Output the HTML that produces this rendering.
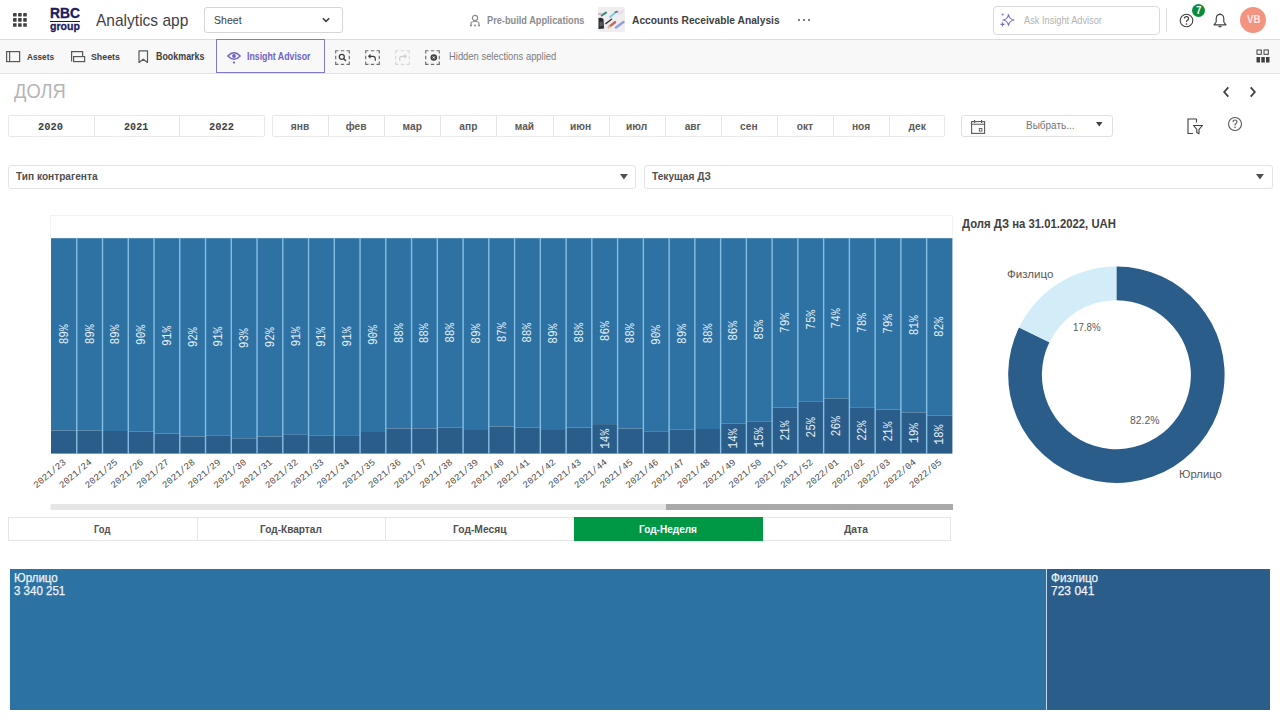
<!DOCTYPE html><html><head><meta charset="utf-8"><style>
*{margin:0;padding:0;box-sizing:border-box}
html,body{width:1280px;height:720px;overflow:hidden;background:#fff;font-family:'Liberation Sans', sans-serif;color:#404040}
.a{position:absolute}
.t{position:absolute;white-space:nowrap;line-height:1}
</style></head><body>
<div class="a" style="left:0;top:0;width:1280px;height:39px;background:#fff"></div>
<div class="a" style="left:0;top:39px;width:1280px;height:1px;background:#dedede"></div>
<svg class="a" style="left:13.2px;top:13.3px" width="15" height="15"><rect x="0.0" y="0.0" width="3.6" height="3.6" rx="0.4" fill="#404040"/><rect x="5.1" y="0.0" width="3.6" height="3.6" rx="0.4" fill="#404040"/><rect x="10.2" y="0.0" width="3.6" height="3.6" rx="0.4" fill="#404040"/><rect x="0.0" y="5.1" width="3.6" height="3.6" rx="0.4" fill="#404040"/><rect x="5.1" y="5.1" width="3.6" height="3.6" rx="0.4" fill="#404040"/><rect x="10.2" y="5.1" width="3.6" height="3.6" rx="0.4" fill="#404040"/><rect x="0.0" y="10.2" width="3.6" height="3.6" rx="0.4" fill="#404040"/><rect x="5.1" y="10.2" width="3.6" height="3.6" rx="0.4" fill="#404040"/><rect x="10.2" y="10.2" width="3.6" height="3.6" rx="0.4" fill="#404040"/></svg>
<div class="t" style="left:50.30px;top:7.32px;font:bold 13.95px/1 'Liberation Sans', sans-serif;color:#1c1a5e;transform:scaleX(0.9897);transform-origin:0 0;-webkit-text-stroke:0.35px #1c1a5e;">RBC</div>
<div class="a" style="left:50px;top:20.6px;width:30.3px;height:1.5px;background:#1c1a5e"></div>
<div class="t" style="left:50.30px;top:20.60px;font:bold 11.00px/1 'Liberation Sans', sans-serif;color:#1c1a5e;transform:scaleX(0.9588);transform-origin:0 0;-webkit-text-stroke:0.3px #1c1a5e;">group</div>
<div class="t" style="left:96.40px;top:13.05px;font:normal 15.70px/1 'Liberation Sans', sans-serif;color:#3f3f3f;transform:scaleX(0.9893);transform-origin:0 0;">Analytics app</div>
<div class="a" style="left:203.5px;top:7.3px;width:139.5px;height:25.4px;border:1px solid #d6d6d6;border-radius:3px"></div>
<div class="t" style="left:214.00px;top:13.89px;font:normal 11.63px/1 'Liberation Sans', sans-serif;color:#404040;transform:scaleX(0.9077);transform-origin:0 0;">Sheet</div>
<svg class="a" style="left:321px;top:16px" width="10" height="8"><path d="M1.8 2.2 L5 5.4 L8.2 2.2" stroke="#404040" stroke-width="1.6" fill="none"/></svg>
<svg class="a" style="left:469px;top:14px" width="12" height="13"><circle cx="6" cy="4" r="2.6" stroke="#8c8c8c" stroke-width="1.2" fill="none"/><path d="M2 11.5 V9.5 Q2 7.5 6 7.5 Q10 7.5 10 9.5 V11.5" stroke="#8c8c8c" stroke-width="1.2" fill="none"/><circle cx="2" cy="11.5" r="1" fill="#8c8c8c"/><circle cx="6" cy="11.5" r="1" fill="#8c8c8c"/><circle cx="10" cy="11.5" r="1" fill="#8c8c8c"/></svg>
<div class="t" style="left:487.00px;top:14.52px;font:bold 10.76px/1 'Liberation Sans', sans-serif;color:#8c8c8c;transform:scaleX(0.8572);transform-origin:0 0;">Pre-build Applications</div>
<svg class="a" style="left:598px;top:7px" width="27" height="25"><rect width="27" height="25" rx="1.5" fill="#efedf0"/><path d="M0.5 11 Q3 10 5.5 12 L6 21.5 L0.5 22 Z" fill="#2a2a2e"/><path d="M1.5 15 L4.5 14.5 L5 19 L1.5 19.5 Z" fill="#55555c"/><line x1="3.8" y1="8.4" x2="8" y2="5.6" stroke="#3b8a80" stroke-width="2.2" stroke-linecap="round"/><line x1="0.8" y1="7.2" x2="2.6" y2="6.6" stroke="#d9a3b5" stroke-width="1.6" stroke-linecap="round"/><line x1="12.2" y1="10" x2="17.6" y2="5.2" stroke="#7fcfe2" stroke-width="2.2" stroke-linecap="round"/><line x1="17.6" y1="5.2" x2="19.4" y2="4.6" stroke="#7a7a80" stroke-width="1.8" stroke-linecap="round"/><line x1="7.8" y1="16.6" x2="13.6" y2="12.2" stroke="#3a3a3e" stroke-width="1.4" stroke-linecap="round"/><line x1="11.5" y1="19.6" x2="17" y2="15.2" stroke="#c06a66" stroke-width="2.6" stroke-linecap="round"/><line x1="10.4" y1="20.6" x2="11.8" y2="19.6" stroke="#dcc896" stroke-width="2" stroke-linecap="round"/><line x1="18" y1="20.5" x2="25.5" y2="15" stroke="#8fa0d8" stroke-width="2.4" stroke-linecap="round"/><line x1="21" y1="7" x2="25" y2="4" stroke="#e2dde8" stroke-width="2" stroke-linecap="round"/></svg>
<div class="t" style="left:632.00px;top:14.54px;font:bold 11.41px/1 'Liberation Sans', sans-serif;color:#404040;transform:scaleX(0.8980);transform-origin:0 0;">Accounts Receivable Analysis</div>
<div class="a" style="left:797.5px;top:19.3px;width:2px;height:2px;border-radius:1px;background:#505050"></div>
<div class="a" style="left:802.5px;top:19.3px;width:2px;height:2px;border-radius:1px;background:#505050"></div>
<div class="a" style="left:807.5px;top:19.3px;width:2px;height:2px;border-radius:1px;background:#505050"></div>
<div class="a" style="left:992.5px;top:5.5px;width:167px;height:29px;border:1px solid #dadada;border-radius:4px"></div>
<svg class="a" style="left:1000px;top:13px" width="16" height="14"><path d="M8.5 1.5 Q9.3 6.2 14 7 Q9.3 7.8 8.5 12.5 Q7.7 7.8 3 7 Q7.7 6.2 8.5 1.5 Z" stroke="#7b70c8" stroke-width="1.2" fill="none" stroke-linejoin="round"/><circle cx="2.6" cy="1.6" r="1" fill="#7b70c8"/><path d="M0.5 11.3 H4.5 M2.5 9.3 V13.3" stroke="#7b70c8" stroke-width="1.2"/></svg>
<div class="t" style="left:1024.40px;top:15.84px;font:normal 10.32px/1 'Liberation Sans', sans-serif;color:#b3b3b3;transform:scaleX(0.8945);transform-origin:0 0;">Ask Insight Advisor</div>
<div class="a" style="left:1166px;top:7.5px;width:1px;height:24.5px;background:#e0e0e0"></div>
<svg class="a" style="left:1179px;top:12.5px" width="16" height="16"><circle cx="7.5" cy="7.5" r="6.3" stroke="#404040" stroke-width="1.1" fill="none"/><path d="M5.4 5.6 Q5.4 3.6 7.5 3.6 Q9.6 3.6 9.6 5.5 Q9.6 6.7 8.2 7.4 Q7.5 7.8 7.5 9" stroke="#404040" stroke-width="1.2" fill="none"/><circle cx="7.5" cy="11" r="0.85" fill="#404040"/></svg>
<div class="a" style="left:1192px;top:3.8px;width:13.2px;height:13.2px;border-radius:50%;background:#0b8a3b"></div>
<div class="t" style="left:1196.00px;top:5.91px;font:bold 10.17px/1 'Liberation Sans', sans-serif;color:#ffffff;transform:scaleX(0.9563);transform-origin:0 0;">7</div>
<svg class="a" style="left:1212px;top:12px" width="16" height="16"><path d="M8 1.3 V2.3 M8 2.3 C5 2.3 4.2 4.7 4.2 7 V10 L2 12.8 H14 L11.8 10 V7 C11.8 4.7 11 2.3 8 2.3 Z" stroke="#404040" stroke-width="1.15" fill="none" stroke-linejoin="round"/><path d="M6.6 14 Q8 15.4 9.4 14" stroke="#404040" stroke-width="1.15" fill="none"/></svg>
<div class="a" style="left:1240.2px;top:6.6px;width:26.2px;height:26.2px;border-radius:50%;background:#f29480"></div>
<div class="t" style="left:1246.50px;top:14.43px;font:bold 11.34px/1 'Liberation Sans', sans-serif;color:#fde9e4;transform:scaleX(0.8567);transform-origin:0 0;">VB</div>
<div class="a" style="left:0;top:40px;width:1280px;height:33px;background:#f8f8f8"></div>
<div class="a" style="left:0;top:73px;width:1280px;height:1px;background:#e2e2e2"></div>
<svg class="a" style="left:6px;top:51px" width="15" height="12"><rect x="0.6" y="0.6" width="13" height="10" stroke="#595959" stroke-width="1.2" fill="none"/><path d="M3.6 0.6 V10.6" stroke="#595959" stroke-width="1.2"/></svg>
<div class="t" style="left:27.00px;top:51.86px;font:bold 9.88px/1 'Liberation Sans', sans-serif;color:#404040;transform:scaleX(0.8328);transform-origin:0 0;">Assets</div>
<svg class="a" style="left:70.5px;top:51px" width="15" height="12"><path d="M0.6 10.6 V0.6 H11.6 V5" stroke="#595959" stroke-width="1.2" fill="none"/><rect x="2.6" y="5.6" width="11" height="5" stroke="#595959" stroke-width="1.2" fill="none"/></svg>
<div class="t" style="left:90.60px;top:51.86px;font:bold 9.88px/1 'Liberation Sans', sans-serif;color:#404040;transform:scaleX(0.8914);transform-origin:0 0;">Sheets</div>
<svg class="a" style="left:137.5px;top:50px" width="11" height="14"><path d="M1 0.8 H9.5 V12.5 L5.25 9.2 L1 12.5 Z" stroke="#595959" stroke-width="1.2" fill="none" stroke-linejoin="round"/></svg>
<div class="t" style="left:156.40px;top:52.01px;font:bold 10.17px/1 'Liberation Sans', sans-serif;color:#404040;transform:scaleX(0.8754);transform-origin:0 0;">Bookmarks</div>
<div class="a" style="left:215.9px;top:39.3px;width:108.7px;height:34px;border:1px solid #8078c8"></div>
<svg class="a" style="left:226.5px;top:50.5px" width="14" height="13"><path d="M0.8 5 Q7 -1.5 13.2 5 Q7 11.5 0.8 5 Z" stroke="#6f64c6" stroke-width="1.4" fill="none" stroke-linejoin="round"/><circle cx="7" cy="5" r="1.9" fill="#6f64c6"/><circle cx="7" cy="11.6" r="1.1" fill="#6f64c6"/></svg>
<div class="t" style="left:246.60px;top:52.01px;font:bold 10.17px/1 'Liberation Sans', sans-serif;color:#6f64c6;transform:scaleX(0.8634);transform-origin:0 0;">Insight Advisor</div>
<svg class="a" style="left:334.8px;top:49.8px;opacity:1" width="15" height="15"><path d="M0.7 3.5 V0.7 H3.5 M5.8 0.7 H9.2 M11.5 0.7 H14.3 V3.5 M14.3 5.8 V9.2 M14.3 11.5 V14.3 H11.5 M9.2 14.3 H5.8 M3.5 14.3 H0.7 V11.5 M0.7 9.2 V5.8" stroke="#6e6e6e" stroke-width="1.15" fill="none"/><circle cx="6.8" cy="6.8" r="2.5" stroke="#404040" stroke-width="1.3" fill="none"/><path d="M8.7 8.7 L11 11" stroke="#404040" stroke-width="1.5"/></svg>
<svg class="a" style="left:364.8px;top:49.8px;opacity:1" width="15" height="15"><path d="M0.7 3.5 V0.7 H3.5 M5.8 0.7 H9.2 M11.5 0.7 H14.3 V3.5 M14.3 5.8 V9.2 M14.3 11.5 V14.3 H11.5 M9.2 14.3 H5.8 M3.5 14.3 H0.7 V11.5 M0.7 9.2 V5.8" stroke="#6e6e6e" stroke-width="1.15" fill="none"/><path d="M5.5 4.5 L3.8 6.3 L5.5 8.1 M3.8 6.3 H8 Q10.3 6.3 10.3 8.6 V10.8" stroke="#404040" stroke-width="1.2" fill="none"/></svg>
<svg class="a" style="left:394.8px;top:49.8px;opacity:0.22" width="15" height="15"><path d="M0.7 3.5 V0.7 H3.5 M5.8 0.7 H9.2 M11.5 0.7 H14.3 V3.5 M14.3 5.8 V9.2 M14.3 11.5 V14.3 H11.5 M9.2 14.3 H5.8 M3.5 14.3 H0.7 V11.5 M0.7 9.2 V5.8" stroke="#6e6e6e" stroke-width="1.15" fill="none"/><path d="M9.5 4.5 L11.2 6.3 L9.5 8.1 M11.2 6.3 H7 Q4.7 6.3 4.7 8.6 V10.8" stroke="#404040" stroke-width="1.2" fill="none"/></svg>
<svg class="a" style="left:424.8px;top:49.8px;opacity:1" width="15" height="15"><path d="M0.7 3.5 V0.7 H3.5 M5.8 0.7 H9.2 M11.5 0.7 H14.3 V3.5 M14.3 5.8 V9.2 M14.3 11.5 V14.3 H11.5 M9.2 14.3 H5.8 M3.5 14.3 H0.7 V11.5 M0.7 9.2 V5.8" stroke="#6e6e6e" stroke-width="1.15" fill="none"/><circle cx="8.8" cy="7.5" r="3.3" fill="#404040"/><path d="M7.7 6.4 L9.9 8.6 M9.9 6.4 L7.7 8.6" stroke="#f8f8f8" stroke-width="1"/></svg>
<div class="t" style="left:448.80px;top:52.07px;font:normal 10.47px/1 'Liberation Sans', sans-serif;color:#7d7d7d;transform:scaleX(0.8989);transform-origin:0 0;">Hidden selections applied</div>
<svg class="a" style="left:1256px;top:49px" width="15" height="15"><rect x="1" y="1" width="4.3" height="4.3" stroke="#404040" stroke-width="1" fill="none"/><rect x="8" y="1" width="4.3" height="4.3" stroke="#404040" stroke-width="1" fill="none"/><rect x="0.5" y="8" width="3.5" height="5.5" fill="#404040"/><rect x="5.3" y="8" width="3.5" height="5.5" fill="#404040"/><rect x="10" y="8" width="3.5" height="5.5" fill="#404040"/></svg>
<div class="t" style="left:14.40px;top:79.96px;font:normal 21.08px/1 'Liberation Sans', sans-serif;color:#b5b5b5;transform:scaleX(0.8682);transform-origin:0 0;">ДОЛЯ</div>
<svg class="a" style="left:1220px;top:85px" width="12" height="14"><path d="M8.3 2.3 L4.2 7 L8.3 11.7" stroke="#404040" stroke-width="1.8" fill="none"/></svg>
<svg class="a" style="left:1246.5px;top:85px" width="12" height="14"><path d="M3.7 2.3 L7.8 7 L3.7 11.7" stroke="#404040" stroke-width="1.8" fill="none"/></svg>
<div class="a" style="left:8px;top:114.8px;width:256.5px;height:22.5px;border:1px solid #e8e8e8;border-radius:2px"></div>
<div class="t" style="left:38.00px;top:121.86px;font:bold 11.69px/1 'Liberation Mono', monospace;color:#404040;transform:scaleX(0.8911);transform-origin:0 0;">2020</div>
<div class="a" style="left:93.5px;top:115px;width:1px;height:22px;background:#e6e6e6"></div>
<div class="t" style="left:123.75px;top:121.86px;font:bold 11.69px/1 'Liberation Mono', monospace;color:#404040;transform:scaleX(0.8644);transform-origin:0 0;">2021</div>
<div class="a" style="left:179.0px;top:115px;width:1px;height:22px;background:#e6e6e6"></div>
<div class="t" style="left:209.00px;top:121.86px;font:bold 11.69px/1 'Liberation Mono', monospace;color:#404040;transform:scaleX(0.8911);transform-origin:0 0;">2022</div>
<div class="a" style="left:272px;top:114.8px;width:673.3px;height:22.5px;border:1px solid #e8e8e8;border-radius:2px"></div>
<div class="t" style="left:272.0px;top:122px;width:56.1px;text-align:center;font:bold 10.2px/1 'Liberation Sans', sans-serif;color:#5a5a5a">янв</div>
<div class="a" style="left:328.1px;top:115px;width:1px;height:22px;background:#e6e6e6"></div>
<div class="t" style="left:328.1px;top:122px;width:56.1px;text-align:center;font:bold 10.2px/1 'Liberation Sans', sans-serif;color:#5a5a5a">фев</div>
<div class="a" style="left:384.2px;top:115px;width:1px;height:22px;background:#e6e6e6"></div>
<div class="t" style="left:384.2px;top:122px;width:56.1px;text-align:center;font:bold 10.2px/1 'Liberation Sans', sans-serif;color:#5a5a5a">мар</div>
<div class="a" style="left:440.3px;top:115px;width:1px;height:22px;background:#e6e6e6"></div>
<div class="t" style="left:440.3px;top:122px;width:56.1px;text-align:center;font:bold 10.2px/1 'Liberation Sans', sans-serif;color:#5a5a5a">апр</div>
<div class="a" style="left:496.4px;top:115px;width:1px;height:22px;background:#e6e6e6"></div>
<div class="t" style="left:496.4px;top:122px;width:56.1px;text-align:center;font:bold 10.2px/1 'Liberation Sans', sans-serif;color:#5a5a5a">май</div>
<div class="a" style="left:552.5px;top:115px;width:1px;height:22px;background:#e6e6e6"></div>
<div class="t" style="left:552.5px;top:122px;width:56.1px;text-align:center;font:bold 10.2px/1 'Liberation Sans', sans-serif;color:#5a5a5a">июн</div>
<div class="a" style="left:608.6px;top:115px;width:1px;height:22px;background:#e6e6e6"></div>
<div class="t" style="left:608.6px;top:122px;width:56.1px;text-align:center;font:bold 10.2px/1 'Liberation Sans', sans-serif;color:#5a5a5a">июл</div>
<div class="a" style="left:664.7px;top:115px;width:1px;height:22px;background:#e6e6e6"></div>
<div class="t" style="left:664.7px;top:122px;width:56.1px;text-align:center;font:bold 10.2px/1 'Liberation Sans', sans-serif;color:#5a5a5a">авг</div>
<div class="a" style="left:720.8px;top:115px;width:1px;height:22px;background:#e6e6e6"></div>
<div class="t" style="left:720.8px;top:122px;width:56.1px;text-align:center;font:bold 10.2px/1 'Liberation Sans', sans-serif;color:#5a5a5a">сен</div>
<div class="a" style="left:776.9px;top:115px;width:1px;height:22px;background:#e6e6e6"></div>
<div class="t" style="left:776.9px;top:122px;width:56.1px;text-align:center;font:bold 10.2px/1 'Liberation Sans', sans-serif;color:#5a5a5a">окт</div>
<div class="a" style="left:833.0px;top:115px;width:1px;height:22px;background:#e6e6e6"></div>
<div class="t" style="left:833.0px;top:122px;width:56.1px;text-align:center;font:bold 10.2px/1 'Liberation Sans', sans-serif;color:#5a5a5a">ноя</div>
<div class="a" style="left:889.1px;top:115px;width:1px;height:22px;background:#e6e6e6"></div>
<div class="t" style="left:889.1px;top:122px;width:56.1px;text-align:center;font:bold 10.2px/1 'Liberation Sans', sans-serif;color:#5a5a5a">дек</div>
<div class="a" style="left:960.7px;top:114.8px;width:152.6px;height:22.5px;border:1px solid #e0e0e0;border-radius:3px"></div>
<svg class="a" style="left:971px;top:119.5px" width="15" height="14"><rect x="0.6" y="1.6" width="13" height="11.8" stroke="#595959" stroke-width="1.1" fill="none"/><path d="M0.6 4.3 H13.6 M3.6 0 V3 M10.6 0 V3" stroke="#595959" stroke-width="1.1"/><rect x="8.3" y="8.5" width="2.6" height="2.6" stroke="#595959" stroke-width="0.9" fill="none"/></svg>
<div class="t" style="left:1025.50px;top:121.44px;font:normal 10.32px/1 'Liberation Sans', sans-serif;color:#737373;transform:scaleX(0.9670);transform-origin:0 0;">Выбрать...</div>
<svg class="a" style="left:1095.5px;top:122.4px" width="7" height="5"><path d="M0 0 H6.5 L3.25 4.5 Z" fill="#404040"/></svg>
<svg class="a" style="left:1187px;top:118px" width="17" height="17"><path d="M9.5 1 H1 V15.5 H6" stroke="#404040" stroke-width="1.1" fill="none"/><path d="M6.5 7.5 H15.5 L12 11.3 V15.8 L9.8 14.6 V11.3 Z" stroke="#404040" stroke-width="1.1" fill="none" stroke-linejoin="round"/><path d="M9.5 1 V4.5" stroke="#404040" stroke-width="1.1"/></svg>
<svg class="a" style="left:1227px;top:116px" width="16" height="16"><circle cx="8" cy="8" r="6.5" stroke="#595959" stroke-width="1.1" fill="none"/><path d="M6 6 Q6 4 8 4 Q10 4 10 6 Q10 7.2 8.7 7.8 Q8 8.2 8 9.4" stroke="#595959" stroke-width="1.1" fill="none"/><circle cx="8" cy="11.3" r="0.8" fill="#595959"/></svg>
<div class="a" style="left:7.6px;top:165.3px;width:628.6px;height:23.5px;border:1px solid #e3e3e3;border-radius:3px"></div>
<div class="t" style="left:16.40px;top:170.78px;font:bold 11.05px/1 'Liberation Sans', sans-serif;color:#505050;transform:scaleX(0.9165);transform-origin:0 0;">Тип контрагента</div>
<svg class="a" style="left:619.7px;top:174.2px" width="8" height="6"><path d="M0 0 H7.9 L3.95 5.4 Z" fill="#505050"/></svg>
<div class="a" style="left:643.6px;top:165.3px;width:629.4px;height:23.5px;border:1px solid #e3e3e3;border-radius:3px"></div>
<div class="t" style="left:652.00px;top:170.78px;font:bold 11.05px/1 'Liberation Sans', sans-serif;color:#505050;transform:scaleX(0.9209);transform-origin:0 0;">Текущая ДЗ</div>
<svg class="a" style="left:1256px;top:174.2px" width="8" height="6"><path d="M0 0 H7.9 L3.95 5.4 Z" fill="#505050"/></svg>
<svg class="a" style="left:0;top:0" width="1280" height="720"><rect x="50.5" y="215.5" width="902" height="22.7" fill="none" stroke="#f3f3f3"/><rect x="51.00" y="238.2" width="25.75" height="192.35" fill="#2d72a3"/><rect x="51.00" y="430.55" width="25.75" height="23.05" fill="#2b5d8a"/><rect x="76.75" y="238.2" width="25.75" height="192.35" fill="#2d72a3"/><rect x="76.75" y="430.55" width="25.75" height="23.05" fill="#2b5d8a"/><rect x="102.51" y="238.2" width="25.75" height="192.80" fill="#2d72a3"/><rect x="102.51" y="431.00" width="25.75" height="22.60" fill="#2b5d8a"/><rect x="128.26" y="238.2" width="25.75" height="193.50" fill="#2d72a3"/><rect x="128.26" y="431.70" width="25.75" height="21.90" fill="#2b5d8a"/><rect x="154.02" y="238.2" width="25.75" height="195.40" fill="#2d72a3"/><rect x="154.02" y="433.60" width="25.75" height="20.00" fill="#2b5d8a"/><rect x="179.77" y="238.2" width="25.75" height="198.30" fill="#2d72a3"/><rect x="179.77" y="436.50" width="25.75" height="17.10" fill="#2b5d8a"/><rect x="205.53" y="238.2" width="25.75" height="197.10" fill="#2d72a3"/><rect x="205.53" y="435.30" width="25.75" height="18.30" fill="#2b5d8a"/><rect x="231.28" y="238.2" width="25.75" height="200.10" fill="#2d72a3"/><rect x="231.28" y="438.30" width="25.75" height="15.30" fill="#2b5d8a"/><rect x="257.03" y="238.2" width="25.75" height="198.40" fill="#2d72a3"/><rect x="257.03" y="436.60" width="25.75" height="17.00" fill="#2b5d8a"/><rect x="282.79" y="238.2" width="25.75" height="196.60" fill="#2d72a3"/><rect x="282.79" y="434.80" width="25.75" height="18.80" fill="#2b5d8a"/><rect x="308.54" y="238.2" width="25.75" height="197.55" fill="#2d72a3"/><rect x="308.54" y="435.75" width="25.75" height="17.85" fill="#2b5d8a"/><rect x="334.30" y="238.2" width="25.75" height="197.00" fill="#2d72a3"/><rect x="334.30" y="435.20" width="25.75" height="18.40" fill="#2b5d8a"/><rect x="360.05" y="238.2" width="25.75" height="193.80" fill="#2d72a3"/><rect x="360.05" y="432.00" width="25.75" height="21.60" fill="#2b5d8a"/><rect x="385.81" y="238.2" width="25.75" height="190.30" fill="#2d72a3"/><rect x="385.81" y="428.50" width="25.75" height="25.10" fill="#2b5d8a"/><rect x="411.56" y="238.2" width="25.75" height="190.20" fill="#2d72a3"/><rect x="411.56" y="428.40" width="25.75" height="25.20" fill="#2b5d8a"/><rect x="437.31" y="238.2" width="25.75" height="189.20" fill="#2d72a3"/><rect x="437.31" y="427.40" width="25.75" height="26.20" fill="#2b5d8a"/><rect x="463.07" y="238.2" width="25.75" height="190.90" fill="#2d72a3"/><rect x="463.07" y="429.10" width="25.75" height="24.50" fill="#2b5d8a"/><rect x="488.82" y="238.2" width="25.75" height="188.30" fill="#2d72a3"/><rect x="488.82" y="426.50" width="25.75" height="27.10" fill="#2b5d8a"/><rect x="514.58" y="238.2" width="25.75" height="189.20" fill="#2d72a3"/><rect x="514.58" y="427.40" width="25.75" height="26.20" fill="#2b5d8a"/><rect x="540.33" y="238.2" width="25.75" height="190.90" fill="#2d72a3"/><rect x="540.33" y="429.10" width="25.75" height="24.50" fill="#2b5d8a"/><rect x="566.09" y="238.2" width="25.75" height="189.30" fill="#2d72a3"/><rect x="566.09" y="427.50" width="25.75" height="26.10" fill="#2b5d8a"/><rect x="591.84" y="238.2" width="25.75" height="185.90" fill="#2d72a3"/><rect x="591.84" y="424.10" width="25.75" height="29.50" fill="#2b5d8a"/><rect x="617.59" y="238.2" width="25.75" height="190.40" fill="#2d72a3"/><rect x="617.59" y="428.60" width="25.75" height="25.00" fill="#2b5d8a"/><rect x="643.35" y="238.2" width="25.75" height="193.60" fill="#2d72a3"/><rect x="643.35" y="431.80" width="25.75" height="21.80" fill="#2b5d8a"/><rect x="669.10" y="238.2" width="25.75" height="191.50" fill="#2d72a3"/><rect x="669.10" y="429.70" width="25.75" height="23.90" fill="#2b5d8a"/><rect x="694.86" y="238.2" width="25.75" height="190.80" fill="#2d72a3"/><rect x="694.86" y="429.00" width="25.75" height="24.60" fill="#2b5d8a"/><rect x="720.61" y="238.2" width="25.75" height="185.20" fill="#2d72a3"/><rect x="720.61" y="423.40" width="25.75" height="30.20" fill="#2b5d8a"/><rect x="746.37" y="238.2" width="25.75" height="183.10" fill="#2d72a3"/><rect x="746.37" y="421.30" width="25.75" height="32.30" fill="#2b5d8a"/><rect x="772.12" y="238.2" width="25.75" height="169.40" fill="#2d72a3"/><rect x="772.12" y="407.60" width="25.75" height="46.00" fill="#2b5d8a"/><rect x="797.87" y="238.2" width="25.75" height="163.10" fill="#2d72a3"/><rect x="797.87" y="401.30" width="25.75" height="52.30" fill="#2b5d8a"/><rect x="823.63" y="238.2" width="25.75" height="160.50" fill="#2d72a3"/><rect x="823.63" y="398.70" width="25.75" height="54.90" fill="#2b5d8a"/><rect x="849.38" y="238.2" width="25.75" height="169.60" fill="#2d72a3"/><rect x="849.38" y="407.80" width="25.75" height="45.80" fill="#2b5d8a"/><rect x="875.14" y="238.2" width="25.75" height="171.30" fill="#2d72a3"/><rect x="875.14" y="409.50" width="25.75" height="44.10" fill="#2b5d8a"/><rect x="900.89" y="238.2" width="25.75" height="174.20" fill="#2d72a3"/><rect x="900.89" y="412.40" width="25.75" height="41.20" fill="#2b5d8a"/><rect x="926.65" y="238.2" width="25.75" height="177.50" fill="#2d72a3"/><rect x="926.65" y="415.70" width="25.75" height="37.90" fill="#2b5d8a"/><rect x="76.05" y="238.2" width="1.4" height="215.4" fill="#86bde2"/><rect x="101.81" y="238.2" width="1.4" height="215.4" fill="#86bde2"/><rect x="127.56" y="238.2" width="1.4" height="215.4" fill="#86bde2"/><rect x="153.32" y="238.2" width="1.4" height="215.4" fill="#86bde2"/><rect x="179.07" y="238.2" width="1.4" height="215.4" fill="#86bde2"/><rect x="204.83" y="238.2" width="1.4" height="215.4" fill="#86bde2"/><rect x="230.58" y="238.2" width="1.4" height="215.4" fill="#86bde2"/><rect x="256.33" y="238.2" width="1.4" height="215.4" fill="#86bde2"/><rect x="282.09" y="238.2" width="1.4" height="215.4" fill="#86bde2"/><rect x="307.84" y="238.2" width="1.4" height="215.4" fill="#86bde2"/><rect x="333.60" y="238.2" width="1.4" height="215.4" fill="#86bde2"/><rect x="359.35" y="238.2" width="1.4" height="215.4" fill="#86bde2"/><rect x="385.11" y="238.2" width="1.4" height="215.4" fill="#86bde2"/><rect x="410.86" y="238.2" width="1.4" height="215.4" fill="#86bde2"/><rect x="436.61" y="238.2" width="1.4" height="215.4" fill="#86bde2"/><rect x="462.37" y="238.2" width="1.4" height="215.4" fill="#86bde2"/><rect x="488.12" y="238.2" width="1.4" height="215.4" fill="#86bde2"/><rect x="513.88" y="238.2" width="1.4" height="215.4" fill="#86bde2"/><rect x="539.63" y="238.2" width="1.4" height="215.4" fill="#86bde2"/><rect x="565.39" y="238.2" width="1.4" height="215.4" fill="#86bde2"/><rect x="591.14" y="238.2" width="1.4" height="215.4" fill="#86bde2"/><rect x="616.89" y="238.2" width="1.4" height="215.4" fill="#86bde2"/><rect x="642.65" y="238.2" width="1.4" height="215.4" fill="#86bde2"/><rect x="668.40" y="238.2" width="1.4" height="215.4" fill="#86bde2"/><rect x="694.16" y="238.2" width="1.4" height="215.4" fill="#86bde2"/><rect x="719.91" y="238.2" width="1.4" height="215.4" fill="#86bde2"/><rect x="745.67" y="238.2" width="1.4" height="215.4" fill="#86bde2"/><rect x="771.42" y="238.2" width="1.4" height="215.4" fill="#86bde2"/><rect x="797.17" y="238.2" width="1.4" height="215.4" fill="#86bde2"/><rect x="822.93" y="238.2" width="1.4" height="215.4" fill="#86bde2"/><rect x="848.68" y="238.2" width="1.4" height="215.4" fill="#86bde2"/><rect x="874.44" y="238.2" width="1.4" height="215.4" fill="#86bde2"/><rect x="900.19" y="238.2" width="1.4" height="215.4" fill="#86bde2"/><rect x="925.95" y="238.2" width="1.4" height="215.4" fill="#86bde2"/><text transform="translate(67.83,334.38) rotate(-90) scale(0.926,1)" text-anchor="middle" font-family="Liberation Mono" font-size="12.0" fill="#e4eef7">89%</text><text transform="translate(66.68,463.10) rotate(-40)" text-anchor="end" font-family="Liberation Mono" font-size="9.4" fill="#4d4d4d">2021/23</text><text transform="translate(93.59,334.38) rotate(-90) scale(0.926,1)" text-anchor="middle" font-family="Liberation Mono" font-size="12.0" fill="#e4eef7">89%</text><text transform="translate(92.43,463.10) rotate(-40)" text-anchor="end" font-family="Liberation Mono" font-size="9.4" fill="#4d4d4d">2021/24</text><text transform="translate(119.34,334.60) rotate(-90) scale(0.926,1)" text-anchor="middle" font-family="Liberation Mono" font-size="12.0" fill="#e4eef7">89%</text><text transform="translate(118.19,463.10) rotate(-40)" text-anchor="end" font-family="Liberation Mono" font-size="9.4" fill="#4d4d4d">2021/25</text><text transform="translate(145.09,334.95) rotate(-90) scale(0.926,1)" text-anchor="middle" font-family="Liberation Mono" font-size="12.0" fill="#e4eef7">90%</text><text transform="translate(143.94,463.10) rotate(-40)" text-anchor="end" font-family="Liberation Mono" font-size="9.4" fill="#4d4d4d">2021/26</text><text transform="translate(170.85,335.90) rotate(-90) scale(0.926,1)" text-anchor="middle" font-family="Liberation Mono" font-size="12.0" fill="#e4eef7">91%</text><text transform="translate(169.69,463.10) rotate(-40)" text-anchor="end" font-family="Liberation Mono" font-size="9.4" fill="#4d4d4d">2021/27</text><text transform="translate(196.60,337.35) rotate(-90) scale(0.926,1)" text-anchor="middle" font-family="Liberation Mono" font-size="12.0" fill="#e4eef7">92%</text><text transform="translate(195.45,463.10) rotate(-40)" text-anchor="end" font-family="Liberation Mono" font-size="9.4" fill="#4d4d4d">2021/28</text><text transform="translate(222.36,336.75) rotate(-90) scale(0.926,1)" text-anchor="middle" font-family="Liberation Mono" font-size="12.0" fill="#e4eef7">91%</text><text transform="translate(221.20,463.10) rotate(-40)" text-anchor="end" font-family="Liberation Mono" font-size="9.4" fill="#4d4d4d">2021/29</text><text transform="translate(248.11,338.25) rotate(-90) scale(0.926,1)" text-anchor="middle" font-family="Liberation Mono" font-size="12.0" fill="#e4eef7">93%</text><text transform="translate(246.96,463.10) rotate(-40)" text-anchor="end" font-family="Liberation Mono" font-size="9.4" fill="#4d4d4d">2021/30</text><text transform="translate(273.87,337.40) rotate(-90) scale(0.926,1)" text-anchor="middle" font-family="Liberation Mono" font-size="12.0" fill="#e4eef7">92%</text><text transform="translate(272.71,463.10) rotate(-40)" text-anchor="end" font-family="Liberation Mono" font-size="9.4" fill="#4d4d4d">2021/31</text><text transform="translate(299.62,336.50) rotate(-90) scale(0.926,1)" text-anchor="middle" font-family="Liberation Mono" font-size="12.0" fill="#e4eef7">91%</text><text transform="translate(298.47,463.10) rotate(-40)" text-anchor="end" font-family="Liberation Mono" font-size="9.4" fill="#4d4d4d">2021/32</text><text transform="translate(325.37,336.98) rotate(-90) scale(0.926,1)" text-anchor="middle" font-family="Liberation Mono" font-size="12.0" fill="#e4eef7">91%</text><text transform="translate(324.22,463.10) rotate(-40)" text-anchor="end" font-family="Liberation Mono" font-size="9.4" fill="#4d4d4d">2021/33</text><text transform="translate(351.13,336.70) rotate(-90) scale(0.926,1)" text-anchor="middle" font-family="Liberation Mono" font-size="12.0" fill="#e4eef7">91%</text><text transform="translate(349.97,463.10) rotate(-40)" text-anchor="end" font-family="Liberation Mono" font-size="9.4" fill="#4d4d4d">2021/34</text><text transform="translate(376.88,335.10) rotate(-90) scale(0.926,1)" text-anchor="middle" font-family="Liberation Mono" font-size="12.0" fill="#e4eef7">90%</text><text transform="translate(375.73,463.10) rotate(-40)" text-anchor="end" font-family="Liberation Mono" font-size="9.4" fill="#4d4d4d">2021/35</text><text transform="translate(402.64,333.35) rotate(-90) scale(0.926,1)" text-anchor="middle" font-family="Liberation Mono" font-size="12.0" fill="#e4eef7">88%</text><text transform="translate(401.48,463.10) rotate(-40)" text-anchor="end" font-family="Liberation Mono" font-size="9.4" fill="#4d4d4d">2021/36</text><text transform="translate(428.39,333.30) rotate(-90) scale(0.926,1)" text-anchor="middle" font-family="Liberation Mono" font-size="12.0" fill="#e4eef7">88%</text><text transform="translate(427.24,463.10) rotate(-40)" text-anchor="end" font-family="Liberation Mono" font-size="9.4" fill="#4d4d4d">2021/37</text><text transform="translate(454.15,332.80) rotate(-90) scale(0.926,1)" text-anchor="middle" font-family="Liberation Mono" font-size="12.0" fill="#e4eef7">88%</text><text transform="translate(452.99,463.10) rotate(-40)" text-anchor="end" font-family="Liberation Mono" font-size="9.4" fill="#4d4d4d">2021/38</text><text transform="translate(479.90,333.65) rotate(-90) scale(0.926,1)" text-anchor="middle" font-family="Liberation Mono" font-size="12.0" fill="#e4eef7">89%</text><text transform="translate(478.75,463.10) rotate(-40)" text-anchor="end" font-family="Liberation Mono" font-size="9.4" fill="#4d4d4d">2021/39</text><text transform="translate(505.65,332.35) rotate(-90) scale(0.926,1)" text-anchor="middle" font-family="Liberation Mono" font-size="12.0" fill="#e4eef7">87%</text><text transform="translate(504.50,463.10) rotate(-40)" text-anchor="end" font-family="Liberation Mono" font-size="9.4" fill="#4d4d4d">2021/40</text><text transform="translate(531.41,332.80) rotate(-90) scale(0.926,1)" text-anchor="middle" font-family="Liberation Mono" font-size="12.0" fill="#e4eef7">88%</text><text transform="translate(530.25,463.10) rotate(-40)" text-anchor="end" font-family="Liberation Mono" font-size="9.4" fill="#4d4d4d">2021/41</text><text transform="translate(557.16,333.65) rotate(-90) scale(0.926,1)" text-anchor="middle" font-family="Liberation Mono" font-size="12.0" fill="#e4eef7">89%</text><text transform="translate(556.01,463.10) rotate(-40)" text-anchor="end" font-family="Liberation Mono" font-size="9.4" fill="#4d4d4d">2021/42</text><text transform="translate(582.92,332.85) rotate(-90) scale(0.926,1)" text-anchor="middle" font-family="Liberation Mono" font-size="12.0" fill="#e4eef7">88%</text><text transform="translate(581.76,463.10) rotate(-40)" text-anchor="end" font-family="Liberation Mono" font-size="9.4" fill="#4d4d4d">2021/43</text><text transform="translate(608.67,331.15) rotate(-90) scale(0.926,1)" text-anchor="middle" font-family="Liberation Mono" font-size="12.0" fill="#e4eef7">86%</text><text transform="translate(608.67,438.85) rotate(-90) scale(0.926,1)" text-anchor="middle" font-family="Liberation Mono" font-size="12.0" fill="#e4eef7">14%</text><text transform="translate(607.52,463.10) rotate(-40)" text-anchor="end" font-family="Liberation Mono" font-size="9.4" fill="#4d4d4d">2021/44</text><text transform="translate(634.43,333.40) rotate(-90) scale(0.926,1)" text-anchor="middle" font-family="Liberation Mono" font-size="12.0" fill="#e4eef7">88%</text><text transform="translate(633.27,463.10) rotate(-40)" text-anchor="end" font-family="Liberation Mono" font-size="9.4" fill="#4d4d4d">2021/45</text><text transform="translate(660.18,335.00) rotate(-90) scale(0.926,1)" text-anchor="middle" font-family="Liberation Mono" font-size="12.0" fill="#e4eef7">90%</text><text transform="translate(659.03,463.10) rotate(-40)" text-anchor="end" font-family="Liberation Mono" font-size="9.4" fill="#4d4d4d">2021/46</text><text transform="translate(685.93,333.95) rotate(-90) scale(0.926,1)" text-anchor="middle" font-family="Liberation Mono" font-size="12.0" fill="#e4eef7">89%</text><text transform="translate(684.78,463.10) rotate(-40)" text-anchor="end" font-family="Liberation Mono" font-size="9.4" fill="#4d4d4d">2021/47</text><text transform="translate(711.69,333.60) rotate(-90) scale(0.926,1)" text-anchor="middle" font-family="Liberation Mono" font-size="12.0" fill="#e4eef7">88%</text><text transform="translate(710.53,463.10) rotate(-40)" text-anchor="end" font-family="Liberation Mono" font-size="9.4" fill="#4d4d4d">2021/48</text><text transform="translate(737.44,330.80) rotate(-90) scale(0.926,1)" text-anchor="middle" font-family="Liberation Mono" font-size="12.0" fill="#e4eef7">86%</text><text transform="translate(737.44,438.50) rotate(-90) scale(0.926,1)" text-anchor="middle" font-family="Liberation Mono" font-size="12.0" fill="#e4eef7">14%</text><text transform="translate(736.29,463.10) rotate(-40)" text-anchor="end" font-family="Liberation Mono" font-size="9.4" fill="#4d4d4d">2021/49</text><text transform="translate(763.20,329.75) rotate(-90) scale(0.926,1)" text-anchor="middle" font-family="Liberation Mono" font-size="12.0" fill="#e4eef7">85%</text><text transform="translate(763.20,437.45) rotate(-90) scale(0.926,1)" text-anchor="middle" font-family="Liberation Mono" font-size="12.0" fill="#e4eef7">15%</text><text transform="translate(762.04,463.10) rotate(-40)" text-anchor="end" font-family="Liberation Mono" font-size="9.4" fill="#4d4d4d">2021/50</text><text transform="translate(788.95,322.90) rotate(-90) scale(0.926,1)" text-anchor="middle" font-family="Liberation Mono" font-size="12.0" fill="#e4eef7">79%</text><text transform="translate(788.95,430.60) rotate(-90) scale(0.926,1)" text-anchor="middle" font-family="Liberation Mono" font-size="12.0" fill="#e4eef7">21%</text><text transform="translate(787.80,463.10) rotate(-40)" text-anchor="end" font-family="Liberation Mono" font-size="9.4" fill="#4d4d4d">2021/51</text><text transform="translate(814.71,319.75) rotate(-90) scale(0.926,1)" text-anchor="middle" font-family="Liberation Mono" font-size="12.0" fill="#e4eef7">75%</text><text transform="translate(814.71,427.45) rotate(-90) scale(0.926,1)" text-anchor="middle" font-family="Liberation Mono" font-size="12.0" fill="#e4eef7">25%</text><text transform="translate(813.55,463.10) rotate(-40)" text-anchor="end" font-family="Liberation Mono" font-size="9.4" fill="#4d4d4d">2021/52</text><text transform="translate(840.46,318.45) rotate(-90) scale(0.926,1)" text-anchor="middle" font-family="Liberation Mono" font-size="12.0" fill="#e4eef7">74%</text><text transform="translate(840.46,426.15) rotate(-90) scale(0.926,1)" text-anchor="middle" font-family="Liberation Mono" font-size="12.0" fill="#e4eef7">26%</text><text transform="translate(839.31,463.10) rotate(-40)" text-anchor="end" font-family="Liberation Mono" font-size="9.4" fill="#4d4d4d">2022/01</text><text transform="translate(866.21,323.00) rotate(-90) scale(0.926,1)" text-anchor="middle" font-family="Liberation Mono" font-size="12.0" fill="#e4eef7">78%</text><text transform="translate(866.21,430.70) rotate(-90) scale(0.926,1)" text-anchor="middle" font-family="Liberation Mono" font-size="12.0" fill="#e4eef7">22%</text><text transform="translate(865.06,463.10) rotate(-40)" text-anchor="end" font-family="Liberation Mono" font-size="9.4" fill="#4d4d4d">2022/02</text><text transform="translate(891.97,323.85) rotate(-90) scale(0.926,1)" text-anchor="middle" font-family="Liberation Mono" font-size="12.0" fill="#e4eef7">79%</text><text transform="translate(891.97,431.55) rotate(-90) scale(0.926,1)" text-anchor="middle" font-family="Liberation Mono" font-size="12.0" fill="#e4eef7">21%</text><text transform="translate(890.81,463.10) rotate(-40)" text-anchor="end" font-family="Liberation Mono" font-size="9.4" fill="#4d4d4d">2022/03</text><text transform="translate(917.72,325.30) rotate(-90) scale(0.926,1)" text-anchor="middle" font-family="Liberation Mono" font-size="12.0" fill="#e4eef7">81%</text><text transform="translate(917.72,433.00) rotate(-90) scale(0.926,1)" text-anchor="middle" font-family="Liberation Mono" font-size="12.0" fill="#e4eef7">19%</text><text transform="translate(916.57,463.10) rotate(-40)" text-anchor="end" font-family="Liberation Mono" font-size="9.4" fill="#4d4d4d">2022/04</text><text transform="translate(943.48,326.95) rotate(-90) scale(0.926,1)" text-anchor="middle" font-family="Liberation Mono" font-size="12.0" fill="#e4eef7">82%</text><text transform="translate(943.48,434.65) rotate(-90) scale(0.926,1)" text-anchor="middle" font-family="Liberation Mono" font-size="12.0" fill="#e4eef7">18%</text><text transform="translate(942.32,463.10) rotate(-40)" text-anchor="end" font-family="Liberation Mono" font-size="9.4" fill="#4d4d4d">2022/05</text><rect x="50.5" y="504" width="902" height="6" fill="#e6e6e6"/><rect x="666" y="504" width="287" height="6" fill="#a9a9a9"/><path d="M1116.40 266.50 A108.2 108.2 0 1 1 1019.08 327.40 L1049.39 342.13 A74.5 74.5 0 1 0 1116.40 300.20 Z" fill="#2b5d8a"/><path d="M1019.08 327.40 A108.2 108.2 0 0 1 1116.40 266.50 L1116.40 300.20 A74.5 74.5 0 0 0 1049.39 342.13 Z" fill="#d2edf7"/></svg>
<div class="a" style="left:7.8px;top:517px;width:943.7px;height:23.5px;border:1px solid #e6e6e6"></div>
<div class="t" style="left:93.75px;top:523.83px;font:bold 11.34px/1 'Liberation Sans', sans-serif;color:#505050;transform:scaleX(0.8291);transform-origin:0 0;">Год</div>
<div class="a" style="left:196.5px;top:517px;width:1px;height:23.5px;background:#e6e6e6"></div>
<div class="t" style="left:259.90px;top:523.83px;font:bold 11.34px/1 'Liberation Sans', sans-serif;color:#505050;transform:scaleX(0.8900);transform-origin:0 0;">Год-Квартал</div>
<div class="a" style="left:385.3px;top:517px;width:1px;height:23.5px;background:#e6e6e6"></div>
<div class="t" style="left:452.50px;top:523.83px;font:bold 11.34px/1 'Liberation Sans', sans-serif;color:#505050;transform:scaleX(0.9049);transform-origin:0 0;">Год-Месяц</div>
<div class="a" style="left:574.0px;top:517px;width:188.8px;height:23.5px;background:#009845"></div>
<div class="t" style="left:639.20px;top:523.83px;font:bold 11.34px/1 'Liberation Sans', sans-serif;color:#ffffff;transform:scaleX(0.8866);transform-origin:0 0;">Год-Неделя</div>
<div class="t" style="left:844.40px;top:523.83px;font:bold 11.34px/1 'Liberation Sans', sans-serif;color:#505050;transform:scaleX(0.9105);transform-origin:0 0;">Дата</div>
<div class="t" style="left:962.30px;top:217.77px;font:bold 12.06px/1 'Liberation Sans', sans-serif;color:#404040;transform:scaleX(0.9392);transform-origin:0 0;">Доля ДЗ на 31.01.2022, UAH</div>
<div class="t" style="left:1006.70px;top:269.57px;font:normal 10.47px/1 'Liberation Sans', sans-serif;color:#595959;transform:scaleX(1.1015);transform-origin:0 0;">Физлицо</div>
<div class="t" style="left:1179.20px;top:468.70px;font:normal 11.19px/1 'Liberation Sans', sans-serif;color:#595959;transform:scaleX(1.0090);transform-origin:0 0;">Юрлицо</div>
<div class="t" style="left:1073.10px;top:322.87px;font:normal 10.47px/1 'Liberation Sans', sans-serif;color:#595959;transform:scaleX(0.9269);transform-origin:0 0;">17.8%</div>
<div class="t" style="left:1129.90px;top:414.58px;font:normal 11.05px/1 'Liberation Sans', sans-serif;color:#595959;transform:scaleX(0.9420);transform-origin:0 0;">82.2%</div>
<div class="a" style="left:9.8px;top:568.8px;width:1036px;height:141.2px;background:#2c73a4"></div>
<div class="a" style="left:1046.9px;top:568.8px;width:223.6px;height:141.2px;background:#2b5d8a"></div>
<div class="a" style="left:1045.8px;top:568.8px;width:1.1px;height:141.2px;background:#c6dcec"></div>
<div class="t" style="left:13.70px;top:571.75px;font:normal 12.50px/1 'Liberation Sans', sans-serif;color:#eef4fa;transform:scaleX(0.9224);transform-origin:0 0;-webkit-text-stroke:0.25px #eef4fa;">Юрлицо</div>
<div class="t" style="left:13.70px;top:585.74px;font:normal 11.92px/1 'Liberation Sans', sans-serif;color:#eef4fa;transform:scaleX(0.9672);transform-origin:0 0;-webkit-text-stroke:0.25px #eef4fa;">3 340 251</div>
<div class="t" style="left:1050.50px;top:571.75px;font:normal 12.50px/1 'Liberation Sans', sans-serif;color:#eef4fa;transform:scaleX(0.9341);transform-origin:0 0;-webkit-text-stroke:0.25px #eef4fa;">Физлицо</div>
<div class="t" style="left:1050.50px;top:585.74px;font:normal 11.92px/1 'Liberation Sans', sans-serif;color:#eef4fa;transform:scaleX(1.0096);transform-origin:0 0;-webkit-text-stroke:0.25px #eef4fa;">723 041</div>
</body></html>
